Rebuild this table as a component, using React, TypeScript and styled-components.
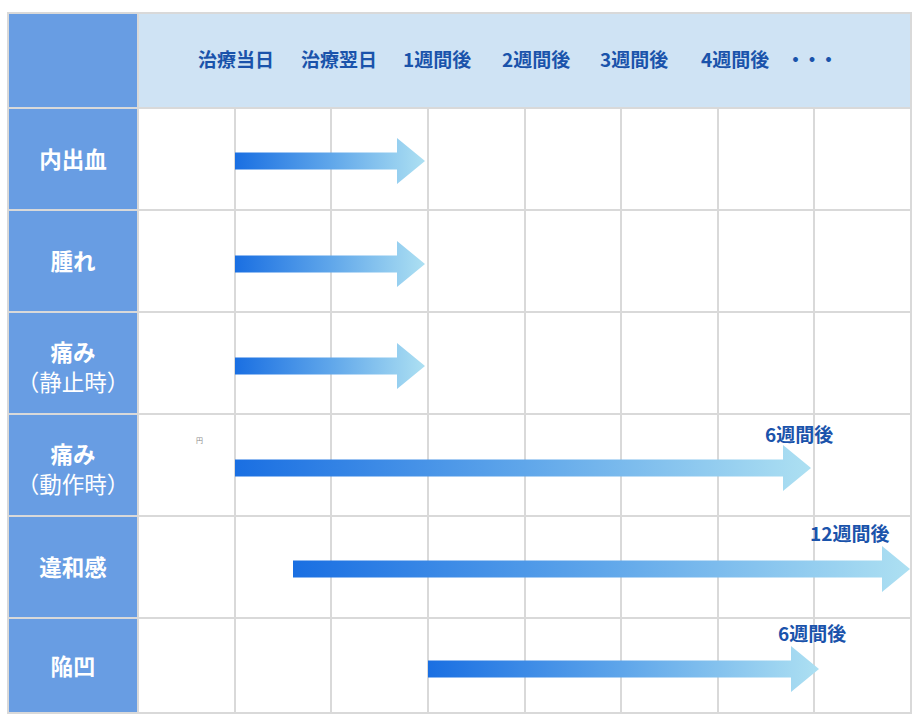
import React from "react";
import styled, { createGlobalStyle } from "styled-components";

const Global = createGlobalStyle`
  html, body { margin: 0; padding: 0; background: #ffffff; }
  body { font-family: "Noto Sans CJK JP", "Noto Sans", sans-serif; }
`;

const Page = styled.div`
  padding: 12px 7px 7px;
`;

const Table = styled.div`
  display: flex;
  flex-direction: column;
  gap: 2px;
  padding: 2px;
  width: 905px;
  box-sizing: border-box;
  background: #d9d9d9;
`;

const HeaderRow = styled.div`
  display: grid;
  grid-template-columns: 128px 1fr;
  gap: 2px;
  height: 93px;
`;

const Corner = styled.div`
  background: #689de3;
`;

const HeaderBand = styled.div`
  background: #cfe3f4;
  display: flex;
  align-items: center;
  padding-left: 59px;
  padding-bottom: 4px;
  box-sizing: border-box;
`;

const HeaderItem = styled.span<{ $w?: number; $dots?: boolean }>`
  flex: none;
  width: ${(p) => (p.$w ? `${p.$w}px` : "auto")};
  font-size: 19px;
  font-weight: 700;
  color: #1a53ab;
  line-height: 1;
  white-space: nowrap;
  letter-spacing: ${(p) => (p.$dots ? "-2.5px" : "0")};
`;

const Row = styled.div<{ $h: number }>`
  position: relative;
  display: grid;
  grid-template-columns: 128px repeat(8, 1fr);
  gap: 2px;
  height: ${(p) => p.$h}px;
`;

const Label = styled.div<{ $double: boolean }>`
  background: #689de3;
  color: #ffffff;
  display: flex;
  flex-direction: column;
  align-items: center;
  justify-content: center;
  padding-top: ${(p) => (p.$double ? "6px" : "0")};
  padding-bottom: ${(p) => (p.$double ? "0" : "2px")};
  box-sizing: border-box;
`;

const LabelMain = styled.div`
  display: block;
  height: 30px;
  font-size: 22.5px;
  font-weight: 700;
  line-height: 30px;
  white-space: nowrap;
`;

const LabelSub = styled.div`
  display: block;
  height: 30px;
  font-size: 22.5px;
  font-weight: 400;
  line-height: 30px;
  white-space: nowrap;
`;

const Cell = styled.div`
  background: #ffffff;
`;

const ArrowBox = styled.div<{ $left: number; $top: number }>`
  position: absolute;
  left: ${(p) => p.$left}px;
  top: ${(p) => p.$top}px;
  height: 46px;
  line-height: 0;
`;

const ArrowNote = styled.span<{ $left: number; $top: number }>`
  position: absolute;
  left: ${(p) => p.$left}px;
  top: ${(p) => p.$top}px;
  font-size: 19px;
  font-weight: 700;
  color: #1a53ab;
  line-height: 20px;
  white-space: nowrap;
`;

const Speck = styled.span`
  position: absolute;
  left: 187px;
  top: 22px;
  font-size: 7px;
  line-height: 7px;
  color: #8c8c8c;
`;

type ArrowProps = { id: string; left: number; top: number; width: number };

const Arrow = ({ id, left, top, width }: ArrowProps) => {
  const head = 28;
  const h = 46;
  const barTop = 14.5;
  const barBot = 31.5;
  const pts = [
    [0, barTop],
    [width - head, barTop],
    [width - head, 0],
    [width, h / 2],
    [width - head, h],
    [width - head, barBot],
    [0, barBot],
  ]
    .map((p) => p.join(","))
    .join(" ");
  return (
    <ArrowBox $left={left} $top={top}>
      <svg width={width} height={h} viewBox={`0 0 ${width} ${h}`}>
        <defs>
          <linearGradient id={id} x1="0" y1="0" x2="1" y2="0">
            <stop offset="0" stopColor="#1a6fe2" />
            <stop offset="0.5" stopColor="#5fa6ea" />
            <stop offset="1" stopColor="#ade0f2" />
          </linearGradient>
        </defs>
        <polygon points={pts} fill={`url(#${id})`} />
      </svg>
    </ArrowBox>
  );
};

type RowData = {
  main: string;
  sub?: string;
  h: number;
  arrow: { left: number; top: number; width: number };
  note?: { text: string; left: number; top: number };
  speck?: boolean;
};

const rows: RowData[] = [
  { main: "内出血", h: 100, arrow: { left: 226, top: 29, width: 190 } },
  { main: "腫れ", h: 100, arrow: { left: 226, top: 30, width: 190 } },
  { main: "痛み", sub: "（静止時）", h: 100, arrow: { left: 226, top: 30, width: 190 } },
  {
    main: "痛み",
    sub: "（動作時）",
    h: 100,
    arrow: { left: 226, top: 30, width: 576 },
    note: { text: "6週間後", left: 756, top: 9 },
    speck: true,
  },
  {
    main: "違和感",
    h: 100,
    arrow: { left: 284, top: 29, width: 617 },
    note: { text: "12週間後", left: 801, top: 6 },
  },
  {
    main: "陥凹",
    h: 93,
    arrow: { left: 419, top: 27, width: 391 },
    note: { text: "6週間後", left: 769, top: 4 },
  },
];

const headers: { text: string; w?: number; dots?: boolean }[] = [
  { text: "治療当日", w: 103 },
  { text: "治療翌日", w: 102 },
  { text: "1週間後", w: 99 },
  { text: "2週間後", w: 98 },
  { text: "3週間後", w: 101 },
  { text: "4週間後", w: 85 },
  { text: "・・・", dots: true },
];

export default function App() {
  return (
    <>
      <Global />
      <Page>
        <Table>
          <HeaderRow>
            <Corner />
            <HeaderBand>
              {headers.map((h) => (
                <HeaderItem key={h.text} $w={h.w} $dots={h.dots}>
                  {h.text}
                </HeaderItem>
              ))}
            </HeaderBand>
          </HeaderRow>
          {rows.map((r, i) => (
            <Row key={i} $h={r.h}>
              <Label $double={!!r.sub}>
                <LabelMain>{r.main}</LabelMain>
                {r.sub && <LabelSub>{r.sub}</LabelSub>}
              </Label>
              {Array.from({ length: 8 }).map((_, j) => (
                <Cell key={j} />
              ))}
              <Arrow id={`grad${i}`} {...r.arrow} />
              {r.note && (
                <ArrowNote $left={r.note.left} $top={r.note.top}>
                  {r.note.text}
                </ArrowNote>
              )}
              {r.speck && <Speck>円</Speck>}
            </Row>
          ))}
        </Table>
      </Page>
    </>
  );
}
